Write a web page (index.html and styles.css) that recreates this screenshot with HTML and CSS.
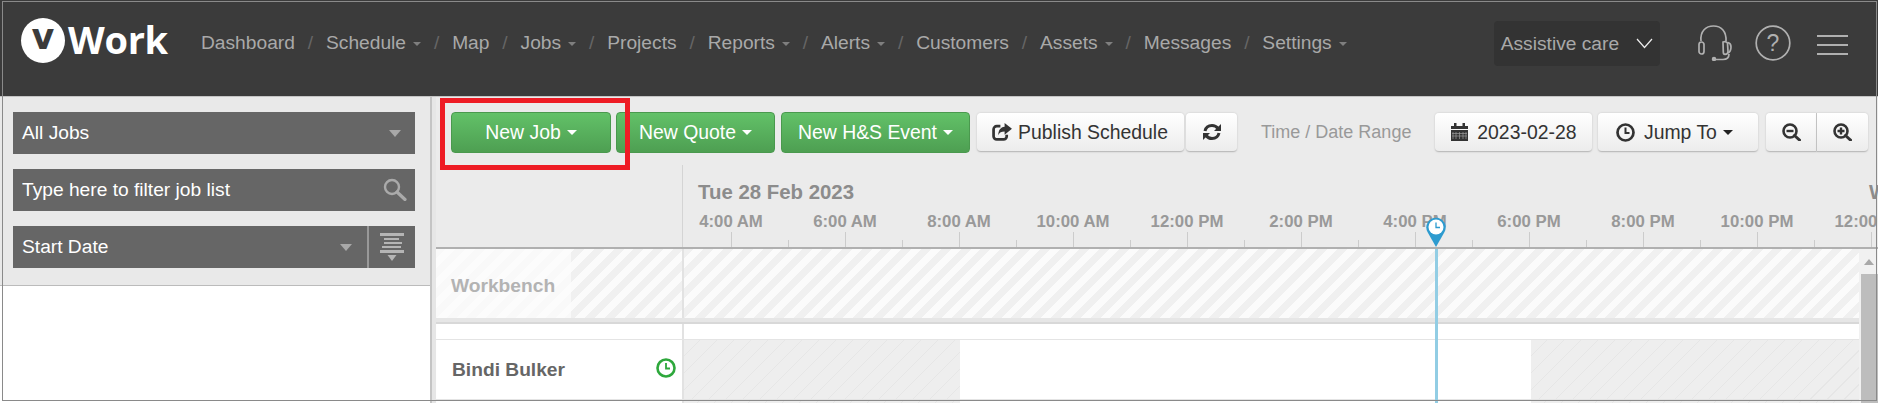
FILE: index.html
```html
<!DOCTYPE html>
<html lang="en">
<head>
<meta charset="utf-8">
<title>vWork Schedule</title>
<link rel="stylesheet" href="styles.css">
</head>
<body>
<div class="app">
  <header class="topbar">
    <div class="logo"><span class="logo-mark">v</span><span class="logo-word">Work</span></div>
    <nav class="nav">
      <a>Dashboard</a><i>/</i>
      <a class="has-caret">Schedule</a><i>/</i>
      <a>Map</a><i>/</i>
      <a class="has-caret">Jobs</a><i>/</i>
      <a>Projects</a><i>/</i>
      <a class="has-caret">Reports</a><i>/</i>
      <a class="has-caret">Alerts</a><i>/</i>
      <a>Customers</a><i>/</i>
      <a class="has-caret">Assets</a><i>/</i>
      <a>Messages</a><i>/</i>
      <a class="has-caret">Settings</a>
    </nav>
    <div class="account">
      <span>Assistive care</span>
      <svg width="17" height="11" viewBox="0 0 17 11"><path d="M1 1l7.500 8.500L16 1" fill="none" stroke="#eee" stroke-width="1.200"/></svg>
    </div>
    <svg class="ico-headset" width="34" height="36" viewBox="0 0 34 36" fill="none" stroke="#b0b0b0" stroke-width="1.700">
      <path d="M3 16C2 6 8 1 15.500 1S28.500 6 28 16"/>
      <rect x="1" y="17" width="5" height="12" rx="2.500"/>
      <path d="M25 17c2-.8 3.500-.5 4.500 1l.5 8.500c0 1.800-1.500 2.800-3 2.800-1 0-1.700-1-1.700-2z"/>
      <path d="M30 17.500c2 .5 3 2 3 4.500 0 3-1 5-3 6"/>
      <path d="M31 29c0 3-2 5.500-6 5.500h-8"/>
      <circle cx="16" cy="34" r="1.400" fill="#b0b0b0"/>
    </svg>
    <svg class="ico-help" width="36" height="36" viewBox="0 0 36 36">
      <circle cx="18" cy="18" r="16.800" fill="none" stroke="#b0b0b0" stroke-width="1.700"/>
      <text x="18" y="26" text-anchor="middle" class="help-mark">?</text>
    </svg>
    <div class="burger"><b></b><b></b><b></b></div>
  </header>

  <div class="workspace">
    <aside class="sidebar">
      <div class="filters">
        <div class="field"><span>All Jobs</span><em class="tri"></em></div>
        <div class="field">
          <input class="filter-input" type="text" placeholder="Type here to filter job list">
          <svg class="field-search" width="24" height="23" viewBox="0 0 24 23" fill="none" stroke="#aaa"><circle cx="9" cy="9" r="7" stroke-width="2.400"/><path d="M14 14l8 7.500" stroke-width="3.200" stroke-linecap="round"/></svg>
        </div>
        <div class="field field-sort">
          <span>Start Date</span><em class="tri"></em>
          <div class="sort-toggle">
            <svg width="24" height="28" viewBox="0 0 24 28" fill="#b5b5b5"><rect y="0" width="24" height="3"/><rect x="4" y="5" width="15" height="2"/><rect x="4" y="9" width="18" height="2"/><rect x="2" y="13" width="19" height="2"/><rect y="17" width="24" height="3"/><path d="M7.500 22h9L12 28z"/></svg>
          </div>
        </div>
      </div>
    </aside>
    <div class="splitter"></div>
    <main class="main">
      <div class="toolbar">
        <button class="btn btn-green w-job">New Job<em class="caret"></em></button>
        <button class="btn btn-green w-quote">New Quote<em class="caret"></em></button>
        <button class="btn btn-green w-hs">New H&amp;S Event<em class="caret"></em></button>
        <button class="btn btn-white w-pub">
          <svg width="21" height="18" viewBox="0 0 20 17" fill="none" stroke="#333"><path d="M8 3H4.500A3 3 0 0 0 1.500 6v6.500a3 3 0 0 0 3 3H11a3 3 0 0 0 3-3V11" stroke-width="2.600"/><path d="M12 0l7 5.500-7 5.500V8c-3 0-5 1-6 3.500C6 7 8 4 12 3.500z" fill="#333" stroke="none"/></svg>
          Publish Schedule
        </button>
        <button class="btn btn-white w-refresh">
          <svg width="18" height="18" viewBox="0 0 18 18" fill="none" stroke="#333" stroke-width="3"><path d="M2 8c.8-3.500 3.500-5.500 7-5.500 2.500 0 4.500 1 6 3"/><path d="M16 10c-.8 3.500-3.500 5.500-7 5.500-2.500 0-4.500-1-6-3"/><path d="M18 1v7h-7z" fill="#333" stroke="none"/><path d="M0 17v-7h7z" fill="#333" stroke="none"/></svg>
        </button>
        <span class="range-label">Time / Date Range</span>
        <button class="btn btn-white w-date">
          <svg width="17" height="18" viewBox="0 0 17 18" fill="#333"><path d="M0 3h3V0h2.500v3h6V0H14v3h3v3H0zM0 7h17v11H0z"/><path d="M2 9v7M5 9v7M8.500 9v7M12 9v7M15 9v7M1 10.500h15M1 13h15" stroke="#999" stroke-width=".7"/></svg>
          2023-02-28
        </button>
        <button class="btn btn-white w-jump">
          <svg width="19" height="19" viewBox="0 0 19 19" fill="none" stroke="#333"><circle cx="9.500" cy="9.500" r="8" stroke-width="2.700"/><path d="M9.500 4.500v5.500h4" stroke-width="2"/></svg>
          Jump To<em class="caret caret-dark"></em>
        </button>
        <div class="btn-group">
          <button class="btn btn-white w-zoom">
            <svg width="19" height="18" viewBox="0 0 19 18" fill="none" stroke="#333"><circle cx="8" cy="8" r="6.500" stroke-width="2.600"/><path d="M12.500 12.500l5 4.500" stroke-width="3" stroke-linecap="round"/><path d="M4.500 8h7" stroke-width="2.400"/></svg>
          </button>
          <button class="btn btn-white w-zoom">
            <svg width="19" height="18" viewBox="0 0 19 18" fill="none" stroke="#333"><circle cx="8" cy="8" r="6.500" stroke-width="2.600"/><path d="M12.500 12.500l5 4.500" stroke-width="3" stroke-linecap="round"/><path d="M4.500 8h7M8 4.500v7" stroke-width="2.400"/></svg>
          </button>
        </div>
      </div>

      <div class="time-head">
        <div class="corner"></div>
        <div class="ruler">
          <div class="days"><span class="day">Tue 28 Feb 2023</span><span class="day-next">Wed</span></div>
          <div class="hours">
            <span>4:00 AM</span><span>6:00 AM</span><span>8:00 AM</span><span>10:00 AM</span><span>12:00 PM</span><span>2:00 PM</span><span>4:00 PM</span><span>6:00 PM</span><span>8:00 PM</span><span>10:00 PM</span><span>12:00 AM</span>
          </div>
        </div>
      </div>

      <div class="grid">
        <div class="rows">
          <div class="row-bench">
            <div class="bench-label"><span>Workbench</span></div>
            <div class="track"></div>
          </div>
          <div class="band"></div>
          <div class="spacer"><div class="spacer-left"></div><div class="track track-plain"></div></div>
          <div class="row-person">
            <div class="person-label">
              <span>Bindi Bulker</span>
              <svg width="20" height="20" viewBox="0 0 20 20" fill="none" stroke="#2ea83c"><circle cx="10" cy="10" r="8.500" stroke-width="2.600"/><path d="M10 5v5.500h4" stroke-width="1.800"/></svg>
            </div>
            <div class="track track-shift"><div class="off off-a"></div><div class="on"></div><div class="off off-b"></div></div>
          </div>
          <div class="row-person">
            <div class="person-label"></div>
            <div class="track track-shift"><div class="off off-a"></div><div class="on"></div><div class="off off-b"></div></div>
          </div>
          <div class="now-line"></div>
        </div>
        <div class="scrollbar"><em class="scroll-up"></em><div class="scroll-thumb"></div></div>
      </div>

      <svg class="now-pin" width="20" height="30" viewBox="0 0 20 30">
        <path d="M10 30L1.500 15A9.700 9.700 0 1 1 18.500 15z" fill="#2d9bcf"/>
        <circle cx="10" cy="10" r="7.500" fill="#fff"/>
        <path d="M10 5.500V10.500h4" fill="none" stroke="#2d9bcf" stroke-width="1.300"/>
      </svg>
    </main>
  </div>

  <div class="frame"></div>
  <div class="highlight"></div>
</div>
</body>
</html>
```
FILE: styles.css
```css
* { box-sizing: border-box; }
html, body { margin: 0; padding: 0; background: #fff; }
body { font-family: "Liberation Sans", Arial, sans-serif; font-size: 19.2px; }
.app { position: relative; width: 1878px; height: 403px; overflow: hidden; }

/* top bar */
.topbar {
  height: 97px; background: #3b3b3b; border-bottom: 1px solid #c4c4c4;
  display: flex; align-items: flex-start; padding: 18px 0 0 21px;
}
.logo { display: flex; align-items: center; width: 180px; height: 45px; }
.logo-mark {
  width: 44px; height: 45px; border-radius: 50%; background: #fff; color: #3b3b3b;
  font: bold 35px/39px "DejaVu Sans", sans-serif; text-align: center;
}
.logo-word {
  margin-left: 3px; color: #fff; font: 700 38px/45px "Open Sans", sans-serif; letter-spacing: -.3px;
  position: relative; top: -1px;
}
.nav { display: flex; align-items: center; height: 50px; color: #a9a9a9; }
.nav i { font-style: normal; color: #666; margin: 0 12.9px; }
.has-caret::after {
  content: ""; display: inline-block; margin-left: 7px; vertical-align: 3px;
  border: 4px solid transparent; border-top-color: #7f7f7f; border-bottom: 0;
}
.account {
  margin-left: 147px; margin-top: 3px; width: 166px; height: 45px; background: #333; border-radius: 4px;
  display: flex; align-items: center; justify-content: space-between;
  padding: 0 7px; color: #a9a9a9;
}
.ico-headset { margin: 7px 0 0 38px; }
.ico-help { margin: 7px 0 0 23px; }
.help-mark { font: 23px "Liberation Sans", sans-serif; fill: #b0b0b0; }
.burger { margin: 17px 0 0 26px; width: 31px; display: flex; flex-direction: column; gap: 7px; }
.burger b { display: block; height: 2px; background: #b0b0b0; }

/* workspace */
.workspace { display: flex; height: 306px; }
.sidebar { width: 430px; flex: none; }
.filters {
  height: 189px; background: #e9e9e9; border-bottom: 1px solid #bbb;
  padding: 15px 15px 0 13px; display: flex; flex-direction: column; gap: 15px;
}
.field {
  position: relative; height: 42px; background: #666; color: #fff; flex: none;
  display: flex; align-items: center; padding-left: 9px;
}
.filter-input {
  flex: 1; height: 100%; border: 0; background: transparent; padding: 0; outline: 0;
  font: 19.2px "Liberation Sans", sans-serif; color: #fff;
}
.filter-input::placeholder { color: #fff; opacity: 1; }
.field-search { position: absolute; right: 8px; top: 9px; }
.tri {
  margin-left: auto; margin-right: 14px;
  border: 6px solid transparent; border-top: 7px solid #a8a8a8; border-bottom: 0;
}
.field-sort .tri { margin-right: 15px; }
.sort-toggle {
  width: 48px; height: 42px; flex: none; border-left: 2px solid #999;
  display: flex; align-items: flex-start; justify-content: center; padding-top: 7px;
}
.splitter {
  width: 6px; flex: none; background: #e6e6e6; border-left: 2px solid #c4c4c4;
}

/* main */
.main { position: relative; width: 1442px; flex: none; background: #ebebeb; }
.toolbar { height: 68px; display: flex; align-items: flex-start; padding: 15px 0 0 15px; }
.btn {
  height: 39px; margin-top: 1px; padding: 0; border-radius: 4px; flex: none;
  display: flex; align-items: center; justify-content: center;
  font: 19.4px "Liberation Sans", sans-serif; cursor: default;
}
.btn-green {
  height: 41px; margin-top: 0; color: #fff; border: 1px solid #4a994e;
  background: linear-gradient(#62c168, #4e9f52);
}
.btn-white {
  color: #333; border: 0; border-bottom: 1px solid #bdbdbd;
  background: linear-gradient(#fff, #ececec); box-shadow: 0 0 2px rgba(0,0,0,.18);
}
.btn-white svg { margin-right: 5px; }
.w-job { width: 160px; margin-right: 5px; }
.w-quote { width: 159px; margin-right: 6px; }
.w-hs { width: 189px; margin-right: 7px; }
.w-pub { width: 207px; margin-right: 2px; padding-right: 1px; }
.w-refresh { width: 51px; }
.w-refresh svg { margin: 0; }
.range-label { margin: 0 24px; line-height: 41px; font-size: 18px; color: #999; flex: none; }
.w-date { width: 157px; margin-right: 6px; }
.w-date svg { margin-right: 9px; }
.w-jump { width: 160px; margin-right: 8px; padding-right: 8px; }
.w-jump svg { margin-right: 9px; }
.btn-group { display: flex; flex: none; margin-top: 1px; }
.w-zoom { width: 51px; margin: 0; }
.w-zoom svg { margin: 0; }
.btn-group .w-zoom:first-child { border-radius: 4px 0 0 4px; border-right: 1px solid #ccc; }
.btn-group .w-zoom:last-child { border-radius: 0 4px 4px 0; }
.caret { margin-left: 6px; border: 5px solid transparent; border-top-color: #fff; border-bottom: 0; }
.caret-dark { border-top-color: #222; }

/* time head */
.time-head { display: flex; height: 84px; border-bottom: 2px solid #b0b0b0; }
.corner { width: 247px; flex: none; border-right: 1px solid #d4d4d4; }
.ruler { flex: 1; overflow: hidden; min-width: 0; }
.days {
  display: flex; height: 45px; padding: 15px 0 0 15px; color: #8c8c8c;
  font-weight: bold; font-size: 20.4px; line-height: 24px; white-space: nowrap;
}
.day, .day-next { flex: none; }
.day-next { margin-left: 1015px; }
.hours { display: flex; margin-left: -9px; height: 37px; }
.hours span {
  flex: none; width: 114px; text-align: center; color: #999;
  font-weight: bold; font-size: 16.8px; line-height: 24px;
  background:
    linear-gradient(#ccc, #ccc) 57px bottom / 1px 15px no-repeat,
    linear-gradient(#ccc, #ccc) 0 bottom / 1px 7px no-repeat;
}

/* rows */
.grid { display: flex; height: 154px; }
.rows { position: relative; width: 1423px; flex: none; background: #fff; box-shadow: inset 0 3px 3px -2px rgba(0,0,0,.15); }
.row-bench { display: flex; height: 69px; }
.bench-label {
  width: 246px; flex: none;
  background: repeating-linear-gradient(135deg, #f0f0f0 0 7px, #fbfbfb 7px 14px);
}
.bench-label span {
  display: block; width: 135px; height: 100%; padding: 22px 0 0 15px; line-height: 30px;
  background: rgba(252,252,252,.75); color: #b3b3b3; font-weight: bold; font-size: 19.2px;
}
.track { flex: 1; border-left: 2px solid #e2e2e2; background: repeating-linear-gradient(135deg, #f0f0f0 0 7px, #fbfbfb 7px 14px); }
.band { height: 6px; background: #e6e6e6; border-bottom: 2px solid #d8d8d8; }
.spacer { display: flex; height: 16px; border-bottom: 1px solid #e4e4e4; }
.spacer-left { width: 246px; flex: none; }
.track-plain { background: #fff; }
.row-person { display: flex; height: 60px; border-bottom: 1px solid #e4e4e4; flex: none; }
.person-label {
  width: 246px; flex: none; display: flex; align-items: center; justify-content: space-between;
  padding: 0 6px 0 16px; color: #666; font-weight: bold; font-size: 19.2px;
}
.person-label svg { position: relative; top: -2px; }
.track-shift { display: flex; background: #fff; }
.off {
  background: repeating-linear-gradient(135deg, #eeeeee 0 11px, #e6e6e6 11px 12px);
}
.off-a { width: 276px; flex: none; }
.on { width: 571px; flex: none; }
.off-b { flex: 1; }
.now-line { position: absolute; left: 999px; top: 0; bottom: 0; width: 3px; background: #92cde4; }
.scrollbar { position: relative; width: 19px; flex: none; background: #f1f1f1; padding: 25px 0 0 2px; }
.scroll-up {
  position: absolute; left: 5px; top: 10px;
  border: 5px solid transparent; border-bottom: 6px solid #a8a8a8; border-top: 0; width: 0;
}
.scroll-thumb { height: 130px; background: #bdbdbd; }
.now-pin { position: absolute; left: 990px; top: 120px; }

/* overlays */
.frame {
  position: absolute; left: 2px; top: 1px; width: 1875px; height: 400px;
  border: 1px solid #8a8a8a; pointer-events: none;
}
.highlight {
  position: absolute; left: 440px; top: 98px; width: 190px; height: 72px;
  border: 5px solid #ee1c25; pointer-events: none;
}
```
